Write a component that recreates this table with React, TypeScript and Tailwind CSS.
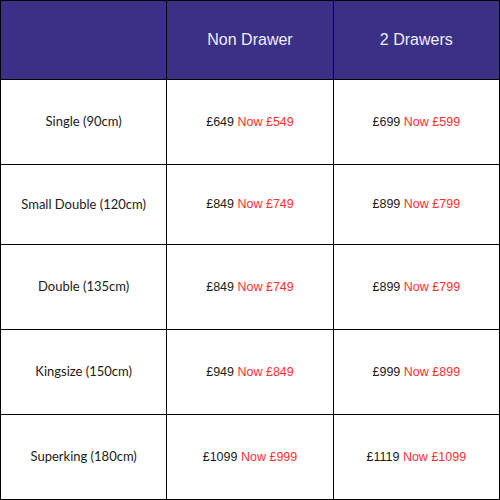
const rows = [
  { size: 'Single (90cm)', a: ['£649', '£549'], b: ['£699', '£599'] },
  { size: 'Small Double (120cm)', a: ['£849', '£749'], b: ['£899', '£799'] },
  { size: 'Double (135cm)', a: ['£849', '£749'], b: ['£899', '£799'] },
  { size: 'Kingsize (150cm)', a: ['£949', '£849'], b: ['£999', '£899'] },
  { size: 'Superking (180cm)', a: ['£1099', '£999'], b: ['£1119', '£1099'] },
];

function Price({ was, now }: { was: string; now: string }) {
  return (
    <span className="text-[12.5px] font-['Liberation_Sans',sans-serif] text-[#1b1b1b]">
      {was} <span className="text-[#ff3131]">Now {now}</span>
    </span>
  );
}

export default function App() {
  return (
    <div className="w-[500px] h-[500px] bg-white">
      <div className="grid grid-cols-3 grid-rows-[79px_85px_80px_85px_85px_85px] border-l border-t border-black w-[500px]">
        <div className="bg-[#3a3186] border-r border-b border-black" />
        <div className="bg-[#3a3186] border-r border-b border-black flex items-center justify-center text-[16px] text-[#eeedf8] font-['Liberation_Sans',sans-serif]">
          Non Drawer
        </div>
        <div className="bg-[#3a3186] border-r border-b border-black flex items-center justify-center text-[16px] text-[#eeedf8] font-['Liberation_Sans',sans-serif]">
          2 Drawers
        </div>
        {rows.map(r => (
          <div key={r.size} className="contents">
            <div className="border-r border-b border-black flex items-center justify-center text-[13px] text-[#1b1b1b] font-['Lato',sans-serif]">
              {r.size}
            </div>
            <div className="border-r border-b border-black flex items-center justify-center">
              <Price was={r.a[0]} now={r.a[1]} />
            </div>
            <div className="border-r border-b border-black flex items-center justify-center">
              <Price was={r.b[0]} now={r.b[1]} />
            </div>
          </div>
        ))}
      </div>
    </div>
  );
}
